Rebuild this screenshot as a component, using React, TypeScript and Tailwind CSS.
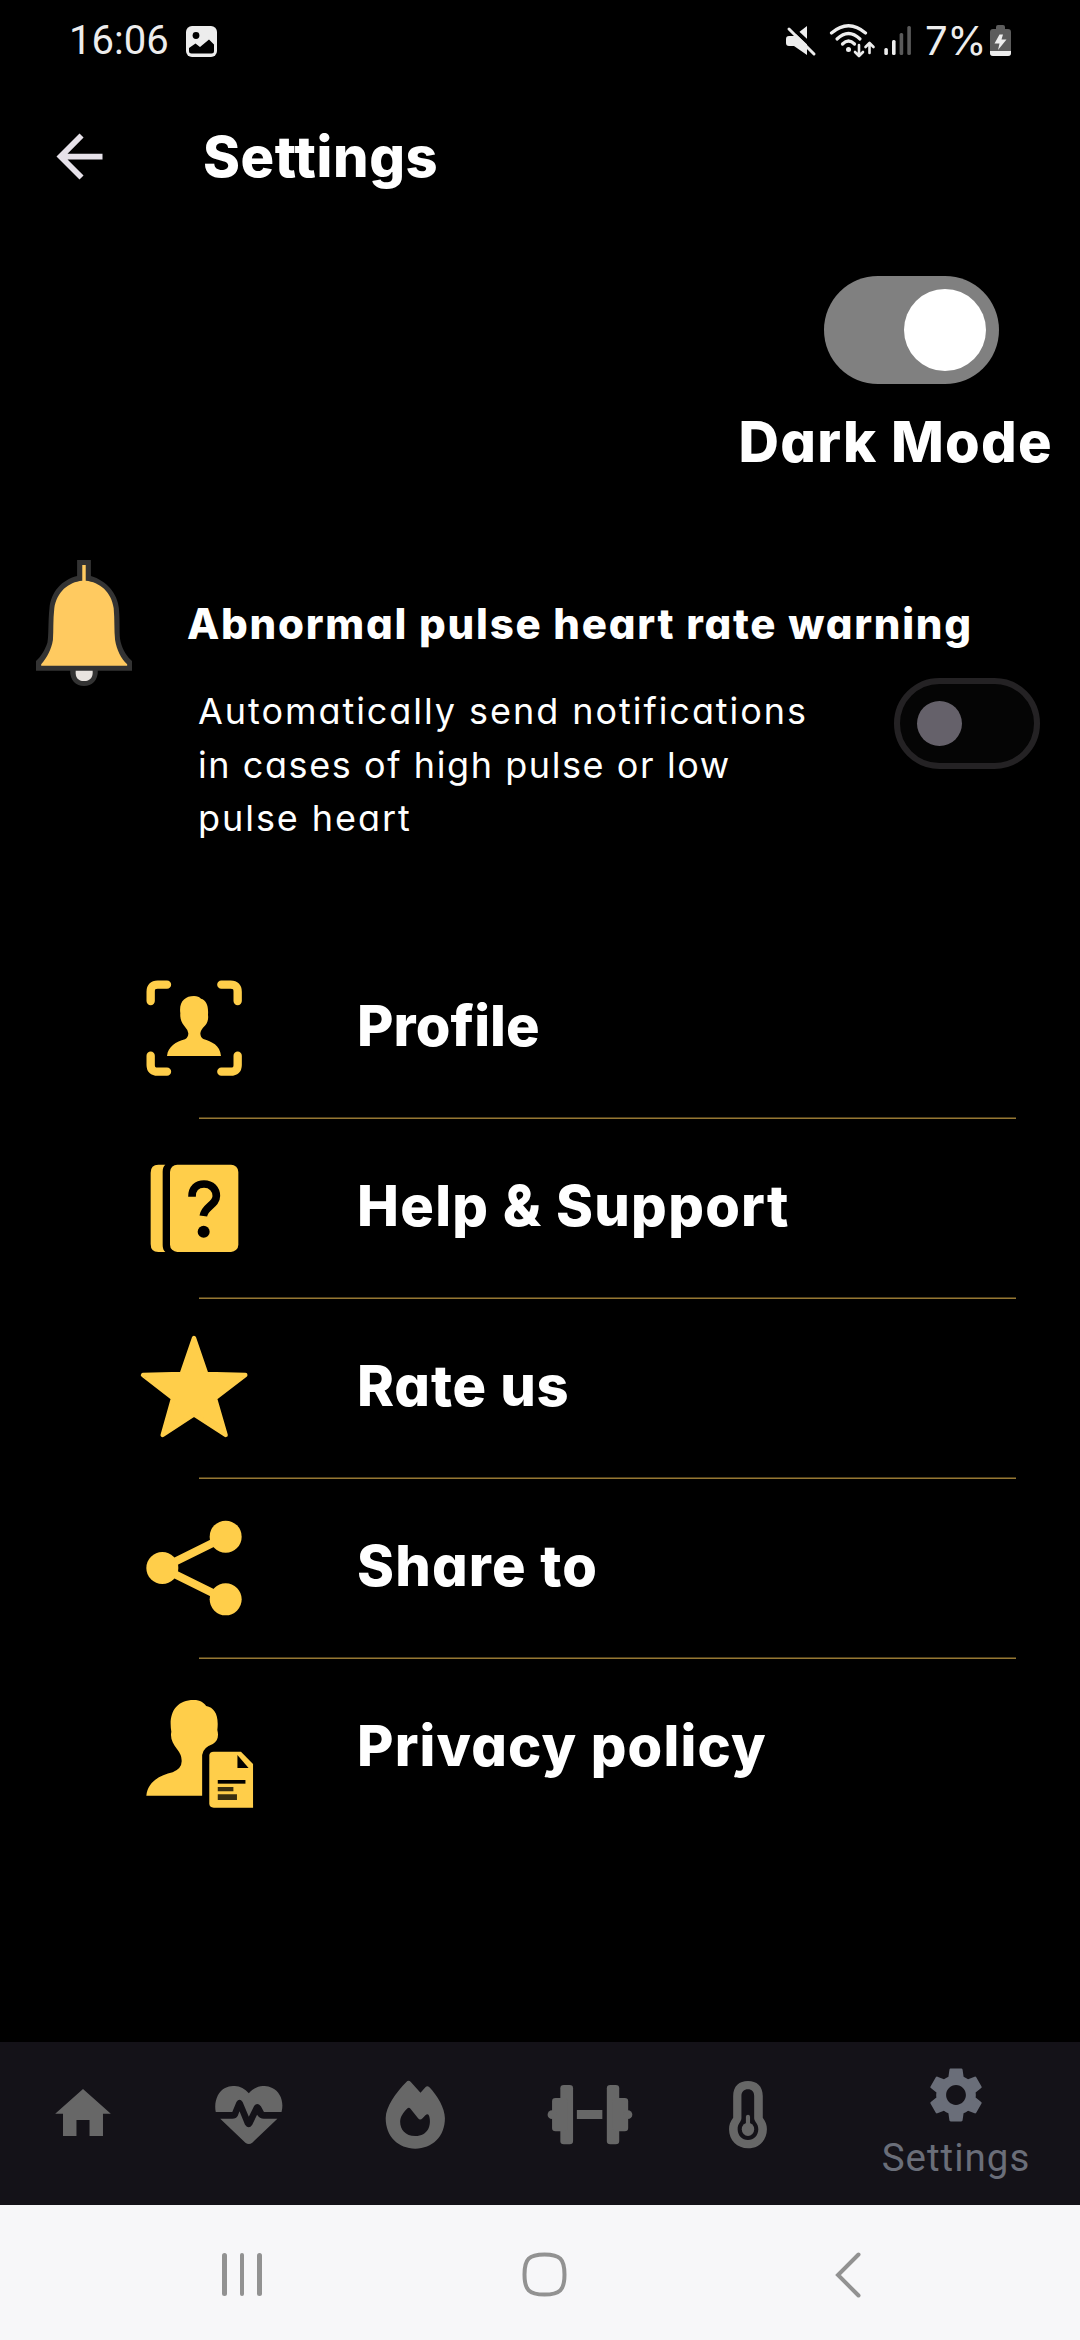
import type { ReactNode } from "react";
import { MdSettings } from "react-icons/md";

const ink = "font-['Inter',sans-serif] [font-feature-settings:'cv11'] text-white whitespace-nowrap";

function StatusBar() {
  return (
    <div className="flex h-[82px] items-center justify-between pl-[69px] pr-[69px] font-['Roboto',sans-serif] text-[40px] text-[#ededed]">
      <div className="flex items-center">
        <span className="w-[117px] leading-[82px] tracking-[0px]">16:06</span>
        <svg width="31" height="31" viewBox="0 0 31 31">
          <rect width="31" height="31" rx="6" fill="#ededed" />
          <circle cx="10" cy="9.500" r="3.400" fill="#000" />
          <path d="M3 22 L9.500 17.500 L14 21 L23 13.500 L28 18.500 V25 Q28 27.500 25.500 27.500 H5.500 Q3 27.500 3 25Z" fill="#000" />
        </svg>
      </div>
      <div className="flex items-center">
        <svg width="136" height="40" viewBox="782 22 136 40" fill="none">
          <path d="M786 40 Q786 37 789 37 H794 L807 27 V56 L794 47 H789 Q786 47 786 44Z" fill="#ededed" />
          <path d="M787 24 L816 51" stroke="#000" strokeWidth="4" />
          <path d="M789 30 L814 55" stroke="#ededed" strokeWidth="3" strokeLinecap="round" />
          <g stroke="#ededed" strokeWidth="3.200" strokeLinecap="round">
            <path d="M831.500 34 Q848.500 19.500 865.500 34" />
            <path d="M837 40 Q848.500 29 860 40" />
            <path d="M842.500 45 Q848.500 39 854.500 45" />
          </g>
          <circle cx="848.500" cy="50.500" r="2.500" fill="#ededed" />
          <path d="M859 46 V56 M855 53 L859 57 L863 53 M869.500 54 V45 M865.500 48 L869.500 44 L873.500 48" stroke="#ededed" strokeWidth="2.600" strokeLinecap="round" strokeLinejoin="round" />
          <rect x="884.300" y="49" width="3.600" height="7" rx="1.500" fill="#ededed" />
          <rect x="892" y="41" width="3.600" height="15" rx="1.500" fill="#ededed" />
          <rect x="899.600" y="34" width="3.600" height="22" rx="1.500" fill="#5a5a5a" />
          <rect x="907.300" y="27" width="3.600" height="29" rx="1.500" fill="#5a5a5a" />
        </svg>
        <span className="ml-[7px] w-[65px] text-[40px] font-normal leading-[82px] font-['Inter',sans-serif] tracking-[-0.5px]">7%</span>
        <svg width="21" height="32" viewBox="0 0 21 32">
          <path d="M6 2 Q6 0 8 0 H13 Q15 0 15 2 V4 H18 Q21 4 21 7 V28 Q21 31 18 31 H3 Q0 31 0 28 V7 Q0 4 3 4 H6Z" fill="#5c5c5c" />
          <path d="M0 26 H21 V28 Q21 31 18 31 H3 Q0 31 0 28Z" fill="#ededed" />
          <path d="M9.500 9.500 H13 L11.500 14.500 H16.500 L8 25 L9.500 18.500 H4.500Z" fill="#ededed" />
        </svg>
      </div>
    </div>
  );
}

function Header() {
  return (
    <div className="flex h-[150px] items-center pl-[45px]">
      <svg className="mb-[2px]" width="69" height="69" viewBox="0 0 24 24" fill="#e6e1e9">
        <path d="M20 11H7.830l5.590-5.590L12 4l-8 8 8 8 1.410-1.410L7.830 13H20v-2z" />
      </svg>
      <h1 className={`${ink} ml-[89px] text-[56px] font-extrabold leading-[60px] tracking-[0.6px]`}>Settings</h1>
    </div>
  );
}

function DarkMode() {
  return (
    <div className="flex flex-col items-end pt-[44px]">
      <div className="mr-[81px] flex h-[108px] w-[175px] items-center justify-end rounded-full bg-[#808080] pr-[13px]">
        <div className="size-[82px] rounded-full bg-white" />
      </div>
      <div className={`${ink} mr-[27px] mt-[28px] text-[56px] font-extrabold leading-[60px] tracking-[1.3px]`}>Dark Mode</div>
    </div>
  );
}

function Warning() {
  return (
    <div className="mt-[88px] flex h-[379px] items-start pl-[36px]">
      <svg width="96" height="126" viewBox="106 60 278 378" preserveAspectRatio="none">
        <path d="M225 60 H265 V108 C310 122 342 160 346 205 C350 250 346 285 351 305 C357 330 370 350 384 363 V392 H285 C286 420 268 438 245 438 C222 438 204 420 205 392 H106 V363 C120 350 132 330 139 308 C143 290 141 240 145 205 C150 155 180 120 225 108Z" fill="#333333" />
        <path d="M240 75 H250 V122 C290 126 325 155 331 205 C334 240 332 270 335 300 C340 330 352 355 370 373 V377 H121 V373 C138 352 150 330 155 300 C157 270 155 240 159 205 C166 155 200 126 240 122Z" fill="#ffca60" />
        <path d="M221 392 H270 C272 412 262 423 245 423 C228 423 219 412 221 392Z" fill="#e9e4e0" />
      </svg>
      <div className="ml-[55px] pt-[34px]">
        <div className={`${ink} text-[42px] font-extrabold leading-[60px] tracking-[1.74px]`}>Abnormal pulse heart rate warning</div>
        <div className="mt-[24px] flex items-start">
          <div className={`${ink} flex w-[707px] flex-col pl-[11px] pt-[7px] text-[36px] leading-[53.5px] tracking-[1.95px]`}>
            <span>Automatically send notifications</span>
            <span className="tracking-[1.58px]">in cases of high pulse or low</span>
            <span>pulse heart</span>
          </div>
          <div className="flex h-[91px] w-[146px] items-center rounded-full border-[6px] border-[#242224] bg-[#050505] pl-[17px]">
            <div className="size-[45px] rounded-full bg-[#65616a]" />
          </div>
        </div>
      </div>
    </div>
  );
}

const gold = "#ffce4a";

const items: { label: string; icon: ReactNode; track: string }[] = [
  {
    label: "Profile",
    track: "tracking-[0.1px]",
    icon: (
      <svg width="110" height="110" viewBox="57 69 330 330" fill="none">
        <path d="M92 153 V125 Q92 104 113 104 H141 M353 153 V125 Q353 104 332 104 H304 M92 317 V345 Q92 365 113 365 H141 M353 317 V345 Q353 365 332 365 H304" stroke={gold} strokeWidth="25" strokeLinecap="round" />
        <path d="M222 138 C232 138 238 141 243 146 C258 150 266 165 264 195 C266 208 262 218 256 226 Q242 240 241 250 Q241 262 250 267 C275 275 300 285 303 318 H141 C144 290 168 275 195 268 Q205 262 205 250 Q204 240 193 228 C182 215 180 200 181 190 C176 155 195 138 222 138Z" fill={gold} />
      </svg>
    ),
  },
  {
    label: "Help & Support",
    track: "tracking-[1.3px]",
    icon: (
      <svg width="110" height="110" viewBox="57 609 330 330" fill="none">
        <path d="M136 644 H115 Q92 644 92 668 V882 Q92 906 115 906 H136 Q128 900 128 885 V665 Q128 650 136 644Z" fill={gold} />
        <rect x="150" y="644" width="205" height="262" rx="22" fill={gold} />
        <path d="M216 740 C216 714 232 702 252 702 C275 702 289 718 289 738 C289 765 253 770 250 798" stroke="#000" strokeWidth="23" />
        <circle cx="251" cy="845" r="18" fill="#000" />
      </svg>
    ),
  },
  {
    label: "Rate us",
    track: "tracking-[0.85px]",
    icon: (
      <svg width="110" height="110" viewBox="57 99 330 330">
        <path d="M222 114 L259 222 L376 225 L285 295 L317 405 L222 343 L128 405 L159 295 L69 225 L185 222Z" fill={gold} stroke={gold} strokeWidth="13" strokeLinejoin="round" />
      </svg>
    ),
  },
  {
    label: "Share to",
    track: "tracking-[1.2px]",
    icon: (
      <svg width="110" height="110" viewBox="57 639 330 330" fill={gold}>
        <path d="M317 710 L127 804 L317 898" stroke={gold} strokeWidth="24" fill="none" />
        <circle cx="317" cy="710" r="48" />
        <circle cx="127" cy="804" r="48" />
        <circle cx="317" cy="898" r="48" />
      </svg>
    ),
  },
  {
    label: "Privacy policy",
    track: "tracking-[1.15px]",
    icon: (
      <svg width="110" height="110" viewBox="42.560 159 246.400 330" preserveAspectRatio="none" className="overflow-visible">
        <path d="M165 180 C180 180 188 188 193 198 C212 203 222 225 218 270 C222 290 218 305 208 312 Q186 322 184 345 V467 H59 C62 425 90 405 118 397 Q140 385 138 360 Q138 345 128 328 C118 310 112 295 115 275 C108 220 125 180 165 180Z" fill={gold} />
        <path d="M210 335 H271 L298 372 V503 H210 Q200 503 200 490 V347 Q200 335 210 335Z" fill={gold} />
        <path d="M263 345 V384 H288Z" fill="#000" />
        <path d="M219 420 H281 V431 H219Z" fill="#000" />
        <path d="M219 441 H254 V454 H219Z M219 463 H262 V480 H219Z" fill="#3a2f10" />
      </svg>
    ),
  },
];

function Menu() {
  return (
    <div>
      {items.map((it, i) => (
        <div key={it.label}>
          <div className="flex h-[178px] items-center pl-[139px]">
            {it.icon}
            <span className={`${ink} ml-[108px] pb-[4px] text-[56px] font-extrabold leading-[60px] ${it.track}`}>{it.label}</span>
          </div>
          {i < items.length - 1 && (
            <div className="ml-[199px] h-[2px] w-[817px] border-b border-[#957733] bg-[#4e3e1a]" />
          )}
        </div>
      ))}
    </div>
  );
}

function NavBar() {
  return (
    <div className="flex h-[163px] items-start bg-[#141218] pt-[26px] text-[#676767]">
      <svg className="ml-[50px] mt-[13px]" width="66" height="67" viewBox="0 0 24 24" preserveAspectRatio="none" fill="currentColor">
        <path d="M9.500 20.300v-6h5v6h5.150v-8.400h3L12 2.600 1.350 11.900h3v8.400z" transform="translate(0.600 0.400) scale(0.950)" />
      </svg>
      <svg className="ml-[97px] mt-[18px]" width="71" height="60" viewBox="620 168 206.160 180" preserveAspectRatio="none" fill="currentColor">
        <path d="M628 246 C622 215 634 185 655 174 C680 162 706 168 724 190 C742 168 768 162 792 174 C815 185 827 215 819 246 H768 L759 229 Q748 215 739 229 L724 260 L706 216 Q697 203 688 216 L676 246Z" />
        <path d="M641 266 H676 Q688 266 692 257 L697 244 L713 284 Q724 299 734 284 L748 254 Q755 266 768 266 H807 L734 338 Q724 346 714 338Z" />
      </svg>
      <svg className="ml-[101px] mt-[12px]" width="61" height="70" viewBox="1118 150 177.130 210" preserveAspectRatio="none" fill="currentColor">
        <path fillRule="evenodd" d="M1186 152 Q1190 152 1193 156 L1221 188 L1236 171 Q1241 166 1247 172 C1270 197 1292 235 1292 265 C1292 320 1255 356 1206 356 C1157 356 1120 320 1120 265 C1120 230 1150 187 1180 156 Q1183 152 1186 152Z M1182 236 Q1187 230 1192 236 L1214 265 Q1220 272 1227 265 L1236 255 Q1242 250 1246 257 C1254 285 1243 318 1206 318 C1177 318 1162 298 1162 275 C1162 260 1172 246 1182 236Z" />
      </svg>
      <svg className="ml-[101px] mt-[16px]" width="86" height="62" viewBox="20.300 162 249.700 186" preserveAspectRatio="none" fill="currentColor">
        <rect x="59" y="165" width="37" height="178" rx="10" />
        <rect x="35" y="204" width="45" height="100" rx="10" />
        <ellipse cx="35" cy="254" rx="13" ry="13" />
        <rect x="107" y="240" width="74" height="27" />
        <rect x="194" y="165" width="36" height="178" rx="10" />
        <rect x="211" y="204" width="45" height="100" rx="10" />
        <ellipse cx="255" cy="254" rx="13" ry="13" />
      </svg>
      <svg className="ml-[95px] mt-[12px]" width="40" height="70" viewBox="545 150 116.150 210" preserveAspectRatio="none" fill="currentColor">
        <path fillRule="evenodd" d="M560 263 V198 C560 168 578 153 603 153 C628 153 646 168 646 198 V263 C655 275 658 285 658 298 C658 332 634 355 603 355 C572 355 548 332 548 298 C548 285 551 275 560 263Z M584 265 V198 C584 185 592 178 603 178 C614 178 621 185 621 198 V265 C622 277 633 280 633 298 C633 317 620 330 603 330 C586 330 573 317 573 298 C573 280 583 277 584 265Z" />
        <rect x="597" y="254" width="12" height="34" rx="6" />
        <ellipse cx="603" cy="298" rx="18" ry="20" />
      </svg>
      <div className="ml-[108px] flex w-[160px] flex-col items-center text-[#6a6e79]">
        <MdSettings className="-mt-[6px] size-[66px]" />
        <span className="mt-[7px] whitespace-nowrap font-['Roboto',sans-serif] text-[38.5px] leading-[46px] tracking-[1px]">Settings</span>
      </div>
    </div>
  );
}

function SystemBar() {
  return (
    <div className="flex h-[135px] items-center bg-[#f7f7f9] pt-[4px]">
      <div className="ml-[222px] flex gap-[13px]">
        <div className="h-[43px] w-[4.500px] rounded-full bg-[#929292]" />
        <div className="h-[43px] w-[4.500px] rounded-full bg-[#929292]" />
        <div className="h-[43px] w-[4.500px] rounded-full bg-[#929292]" />
      </div>
      <svg className="ml-[260px]" width="45" height="45" viewBox="0 0 45 45" fill="none" stroke="#929292" strokeWidth="4">
        <path d="M22.500 2.500 C38 2.500 42.500 7 42.500 22.500 C42.500 38 38 42.500 22.500 42.500 C7 42.500 2.500 38 2.500 22.500 C2.500 7 7 2.500 22.500 2.500Z" />
      </svg>
      <svg className="ml-[267px]" width="28" height="48" viewBox="0 0 28 48" fill="none" stroke="#929292" strokeWidth="4" strokeLinecap="round">
        <path d="M24.500 3.500 L4 24 L24.500 44.500" />
      </svg>
    </div>
  );
}

export default function App() {
  return (
    <div className="flex h-[2340px] w-[1080px] flex-col overflow-hidden bg-black">
      <StatusBar />
      <Header />
      <DarkMode />
      <Warning />
      <Menu />
      <div className="flex-1" />
      <NavBar />
      <SystemBar />
    </div>
  );
}
